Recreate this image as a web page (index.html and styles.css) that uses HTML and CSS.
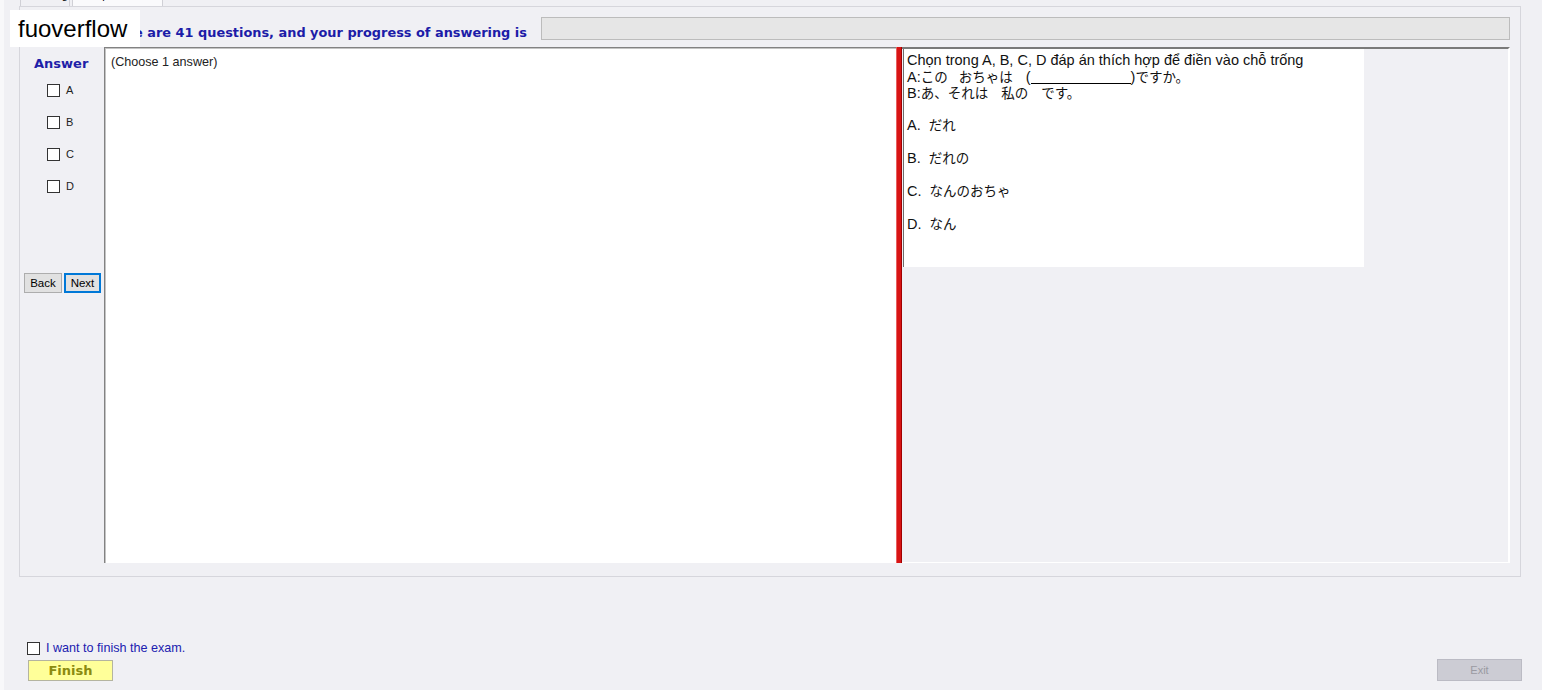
FILE: index.html
```html
<!DOCTYPE html>
<html lang="vi">
<head>
<meta charset="UTF-8">
<meta name="viewport" content="width=device-width, initial-scale=1.0">
<title>Exam</title>
<link rel="stylesheet" href="styles.css">
</head>
<body>
<div class="app">
<div class="logo">fuoverflow</div>
<div class="tabs">
<div class="tab">Reading</div>
<div class="tab active">Multiple Choices</div>
</div>
<div class="panel">
<div class="header">
<span class="header-text">There are 41 questions, and your progress of answering is</span>
<div class="progress"></div>
</div>
<div class="content">
<div class="answers">
<div class="ans-title">Answer</div>
<div class="options">
<label class="opt"><span class="box"></span>A</label>
<label class="opt"><span class="box"></span>B</label>
<label class="opt"><span class="box"></span>C</label>
<label class="opt"><span class="box"></span>D</label>
</div>
<div class="nav">
<button type="button" class="btn">Back</button>
<button type="button" class="btn btn-focus">Next</button>
</div>
</div>
<div class="answer-box">(Choose 1 answer)</div>
<div class="splitter"></div>
<div class="question-pane">
<div class="question">
<div class="q-lines">
<div>Chọn trong A, B, C, D đáp án thích hợp để điền vào chỗ trống</div>
<div>A:<span class="jp">この</span><span class="gap"></span><span class="jp">おちゃは</span><span class="gap wide"></span>(<span class="blank"></span>)<span class="jp">ですか。</span></div>
<div>B:<span class="jp">あ、それは</span><span class="gap wide"></span><span class="jp">私の</span><span class="gap wide"></span><span class="jp">です。</span></div>
</div>
<div class="choices">
<div class="choice">A.&nbsp; <span class="jp">だれ</span></div>
<div class="choice">B.&nbsp; <span class="jp">だれの</span></div>
<div class="choice">C.&nbsp; <span class="jp">なんのおちゃ</span></div>
<div class="choice">D.&nbsp; <span class="jp">なん</span></div>
</div>
</div>
</div>
</div>
</div>
<div class="footer">
<div class="finish-group">
<label class="finish-check"><span class="box"></span>I want to finish the exam.</label>
<button type="button" class="btn-finish">Finish</button>
</div>
<button type="button" class="btn-exit" disabled>Exit</button>
</div>
</div>
</body>
</html>
```

FILE: styles.css
```css
body {
    margin: 0;
    font-family: "Liberation Sans", Arial, "Noto Sans CJK JP", sans-serif;
    background: #f0f0f4;
}
.app {
    position: relative;
    width: 1542px;
    height: 690px;
    display: flex;
    flex-direction: column;
    background: #f0f0f4;
    border-left: 4px solid #f8f8fa;
    box-sizing: border-box;
    overflow: hidden;
}
.logo {
    position: absolute;
    left: 6px;
    top: 10px;
    width: 122px;
    height: 37px;
    padding-left: 8px;
    background: #fff;
    font-size: 24px;
    line-height: 37px;
    color: #000;
}
.tabs {
    display: flex;
    align-items: flex-end;
    height: 6px;
    overflow: hidden;
    padding-left: 16px;
}
.tab {
    flex: none;
    width: 50px;
    height: 20px;
    padding: 0 6px;
    border: 1px solid #d0d0d6;
    border-bottom: none;
    font-size: 11px;
    line-height: 16px;
    color: #000;
    box-sizing: border-box;
    white-space: nowrap;
    overflow: hidden;
}
.tab.active {
    width: 91px;
    margin-left: 2px;
    background: #fafafc;
}
.panel {
    width: 1502px;
    height: 571px;
    margin-left: 15px;
    border: 1px solid #d6d6dc;
    box-sizing: border-box;
    padding: 10px 10px 13px 4px;
    display: flex;
    flex-direction: column;
}
.header {
    display: flex;
    align-items: center;
    height: 23px;
    padding-left: 77px;
}
.header-text {
    flex: 1;
    font-family: "DejaVu Sans", Verdana, sans-serif;
    font-size: 12.9px;
    font-weight: bold;
    color: #1c1ca8;
    padding-top: 8px;
    white-space: nowrap;
}
.progress {
    width: 969px;
    height: 23px;
    background: #e6e6e6;
    border: 1px solid #bcbcbc;
    box-sizing: border-box;
}
.content {
    display: flex;
    margin-top: 7px;
    height: 516px;
}
.answers {
    width: 78px;
    margin-right: 2px;
    display: flex;
    flex-direction: column;
}
.ans-title {
    margin-top: 9px;
    margin-left: 10px;
    font-family: "DejaVu Sans", Verdana, sans-serif;
    font-size: 13px;
    font-weight: bold;
    line-height: 16px;
    color: #1f1fa8;
}
.options {
    margin-top: 2px;
}
.opt {
    display: flex;
    align-items: center;
    height: 32px;
    padding-left: 23px;
    font-size: 11px;
    color: #222;
}
.box {
    display: inline-block;
    width: 13px;
    height: 13px;
    border: 1px solid #333;
    background: #fff;
    box-sizing: border-box;
    margin-right: 6px;
}
.nav {
    display: flex;
    gap: 2px;
    margin-top: 71px;
}
.btn {
    width: 38px;
    height: 20px;
    padding: 0;
    background: #e1e1e1;
    border: 1px solid #adadad;
    font-family: "Liberation Sans", Arial, sans-serif;
    font-size: 11.5px;
    color: #000;
}
.btn-focus {
    width: 37px;
    border: 2px solid #0078d7;
}
.answer-box {
    width: 792px;
    background: #fff;
    border-top: 1px solid #828282;
    border-left: 1px solid #828282;
    box-shadow: inset 1px 1px 0 #c4c4c4;
    box-sizing: border-box;
    padding: 7px 0 0 6px;
    font-size: 12.6px;
    color: #222;
}
.splitter {
    width: 6px;
    background: #d81414;
    border-left: 1px solid #e86060;
    border-right: 1px solid #a00000;
    box-sizing: border-box;
}
.question-pane {
    width: 608px;
    border-top: 2px solid #7a7a7a;
    border-right: 2px solid #fff;
    border-bottom: 1px solid #fff;
    box-sizing: border-box;
}
.question {
    width: 461px;
    height: 218px;
    margin-left: 1px;
    background: #fff;
    border-left: 1px solid #6d6d6d;
    box-sizing: border-box;
    padding: 3px 0 0 3px;
    font-size: 14.5px;
    color: #111;
}
.jp {
    font-family: "Noto Sans CJK JP", sans-serif;
    font-size: 13.5px;
}
.gap {
    display: inline-block;
    width: 11px;
}
.gap.wide {
    width: 13px;
}
.q-lines > div {
    height: 16px;
    line-height: 16px;
    white-space: nowrap;
}
.blank {
    display: inline-block;
    width: 100px;
    height: 13px;
    border-bottom: 1px solid #000;
    vertical-align: -2px;
}
.choices {
    margin-top: 8px;
}
.choice {
    height: 33px;
    line-height: 33px;
}
.footer {
    flex: 1;
    display: flex;
    justify-content: space-between;
    align-items: flex-end;
    padding: 0 20px 9px 23px;
}
.finish-group {
    display: flex;
    flex-direction: column;
}
.finish-check {
    display: flex;
    align-items: center;
    height: 13px;
    font-size: 12.6px;
    line-height: 17px;
    padding-top: 2px;
    color: #2020b0;
}
.finish-check .box {
    margin-right: 6px;
}
.btn-finish {
    width: 85px;
    height: 21px;
    margin-top: 5px;
    margin-left: 1px;
    padding: 0;
    background: #ffff99;
    border: 1px solid #b4b4a0;
    font-family: "DejaVu Sans", Verdana, sans-serif;
    font-size: 13px;
    font-weight: bold;
    color: #8a8a10;
}
.btn-exit {
    width: 85px;
    height: 22px;
    padding: 0;
    background: #ccccd4;
    border: 1px solid #bbbbc4;
    font-family: "Liberation Sans", Arial, sans-serif;
    font-size: 11px;
    color: #9a9aa2;
}
```
